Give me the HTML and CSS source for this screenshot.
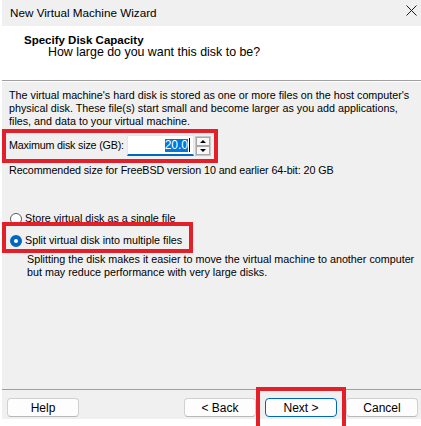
FILE: index.html
```html
<!DOCTYPE html>
<html>
<head>
<meta charset="utf-8">
<link rel="stylesheet" href="styles.css">
</head>
<body>
<div class="window">
  <div class="titlebar">
    <span class="title">New Virtual Machine Wizard</span>
    <svg class="close" width="11" height="11" viewBox="0 0 11 11"><path d="M0.5 0.5L10.5 10.5M10.5 0.5L0.5 10.5" stroke="#1b1b1b" stroke-width="1"/></svg>
  </div>
  <div class="header">
    <div class="h-title">Specify Disk Capacity</div>
    <div class="h-sub">How large do you want this disk to be?</div>
  </div>
  <div class="content">
    <p class="intro">The virtual machine's hard disk is stored as one or more files on the host computer's physical disk. These file(s) start small and become larger as you add applications, files, and data to your virtual machine.</p>
    <div class="size-row">
      <span class="size-label">Maximum disk size (GB):</span>
      <div class="size-input"><span class="sel">20.0</span><span class="caret"></span></div>
      <div class="spin">
        <div class="spin-btn"><span class="arrow up"></span></div>
        <div class="spin-btn"><span class="arrow down"></span></div>
      </div>
    </div>
    <p class="rec">Recommended size for FreeBSD version 10 and earlier 64-bit: 20 GB</p>
    <div class="options">
      <div class="option"><span class="radio"></span><span>Store virtual disk as a single file</span></div>
      <div class="option"><span class="radio checked"></span><span>Split virtual disk into multiple files</span></div>
    </div>
    <p class="desc">Splitting the disk makes it easier to move the virtual machine to another computer but may reduce performance with very large disks.</p>
  </div>
  <div class="footer">
    <button class="btn">Help</button>
    <button class="btn back">&lt; Back</button>
    <button class="btn primary">Next &gt;</button>
    <button class="btn">Cancel</button>
  </div>
</div>
<div class="mark mark-size"></div>
<div class="mark mark-split"></div>
<div class="mark mark-next"></div>
</body>
</html>
```
FILE: styles.css
```css
html, body {
  margin: 0;
  padding: 0;
  background: #ffffff;
  overflow: hidden;
}
body {
  position: relative;
  width: 421px;
  height: 426px;
  font-family: "Liberation Sans", Arial, sans-serif;
  color: #000;
}
.window {
  margin-left: 2px;
  width: 419px;
  height: 419px;
  background: #f0f0f0;
  display: flex;
  flex-direction: column;
}
.titlebar {
  height: 26px;
  flex: none;
  display: flex;
  justify-content: space-between;
  padding: 0 4px 0 8px;
  box-sizing: border-box;
  font-size: 11.7px;
  line-height: 26px;
}
.close {
  margin-top: 5px;
}
.header {
  height: 55px;
  flex: none;
  box-sizing: border-box;
  background: #ffffff;
  border-bottom: 1px solid #a0a0a0;
  padding: 8px 0 0 22px;
}
.h-title {
  font-weight: bold;
  font-size: 11.5px;
  line-height: 12px;
}
.h-sub {
  font-size: 12.4px;
  line-height: 13px;
  padding-left: 24px;
}
.content {
  flex: 1;
  border-top: 1px solid #ffffff;
  padding: 7px 7px 0 7px;
  font-size: 10.75px;
  line-height: 13px;
}
.content p {
  margin: 0;
}
.size-row {
  display: flex;
  align-items: center;
  margin-top: 7px;
  height: 21px;
}
.size-label {
  flex: none;
  width: 118px;
  white-space: nowrap;
  letter-spacing: -0.2px;
}
.size-input {
  flex: none;
  width: 67px;
  height: 21px;
  box-sizing: border-box;
  background: #ffffff;
  border: 1px solid #e6e6e6;
  border-bottom: 2px solid #0067c0;
  display: flex;
  justify-content: flex-end;
  align-items: center;
  padding-right: 3px;
  font-size: 12px;
}
.sel {
  background: #0078d7;
  color: #ffffff;
  line-height: 13px;
}
.caret {
  width: 1px;
  height: 14px;
  background: #000;
  margin-left: 1px;
}
.spin {
  flex: none;
  margin-left: 1px;
  width: 16px;
  height: 20px;
  display: flex;
  flex-direction: column;
  border: 1px solid #c8c8c8;
  box-sizing: border-box;
  background: #f4f4f4;
}
.spin-btn {
  flex: 1;
  display: flex;
  align-items: center;
  justify-content: center;
  border: 1px solid #a8a8a8;
  background: #f7f7f7;
}
.arrow {
  width: 0;
  height: 0;
  border-left: 3px solid transparent;
  border-right: 3px solid transparent;
}
.arrow.up {
  border-bottom: 3px solid #000;
}
.arrow.down {
  border-top: 3px solid #000;
}
.content .rec {
  margin-top: 8px;
  letter-spacing: -0.09px;
}
.options {
  margin-top: 35px;
}
.option {
  display: flex;
  align-items: center;
  margin-bottom: 9px;
}
.radio {
  flex: none;
  width: 12px;
  height: 12px;
  box-sizing: border-box;
  border-radius: 50%;
  border: 1px solid #5a5a5a;
  background: #fff;
  margin: 0 3px 0 1px;
}
.radio.checked {
  border: 4px solid #0067c0;
  background: #ffffff;
}
.content .desc {
  margin-top: -3px;
  margin-right: -6px;
  padding-left: 18px;
}
.footer {
  height: 30px;
  flex: none;
  box-sizing: border-box;
  border-top: 1px solid #a0a0a0;
  padding: 8px 3px 0 5px;
  display: flex;
  align-items: flex-start;
  gap: 9px;
}
.btn {
  width: 72px;
  height: 19px;
  margin: 0;
  padding: 0;
  box-sizing: border-box;
  background: #fdfdfd;
  border: 1px solid #d0d0d0;
  border-bottom-color: #b8b8b8;
  border-radius: 4px;
  font-family: "Liberation Sans", Arial, sans-serif;
  font-size: 12px;
  color: #000;
}
.btn.back {
  margin-left: auto;
}
.btn.primary {
  border-color: #0067c0;
}
.mark {
  position: absolute;
  border: 4px solid #e3202a;
  box-sizing: border-box;
}
.mark-size {
  left: 2px;
  top: 129px;
  width: 216px;
  height: 34px;
}
.mark-split {
  left: 2px;
  top: 222px;
  width: 191px;
  height: 31px;
}
.mark-next {
  left: 256px;
  top: 387px;
  width: 90px;
  height: 50px;
}
```
